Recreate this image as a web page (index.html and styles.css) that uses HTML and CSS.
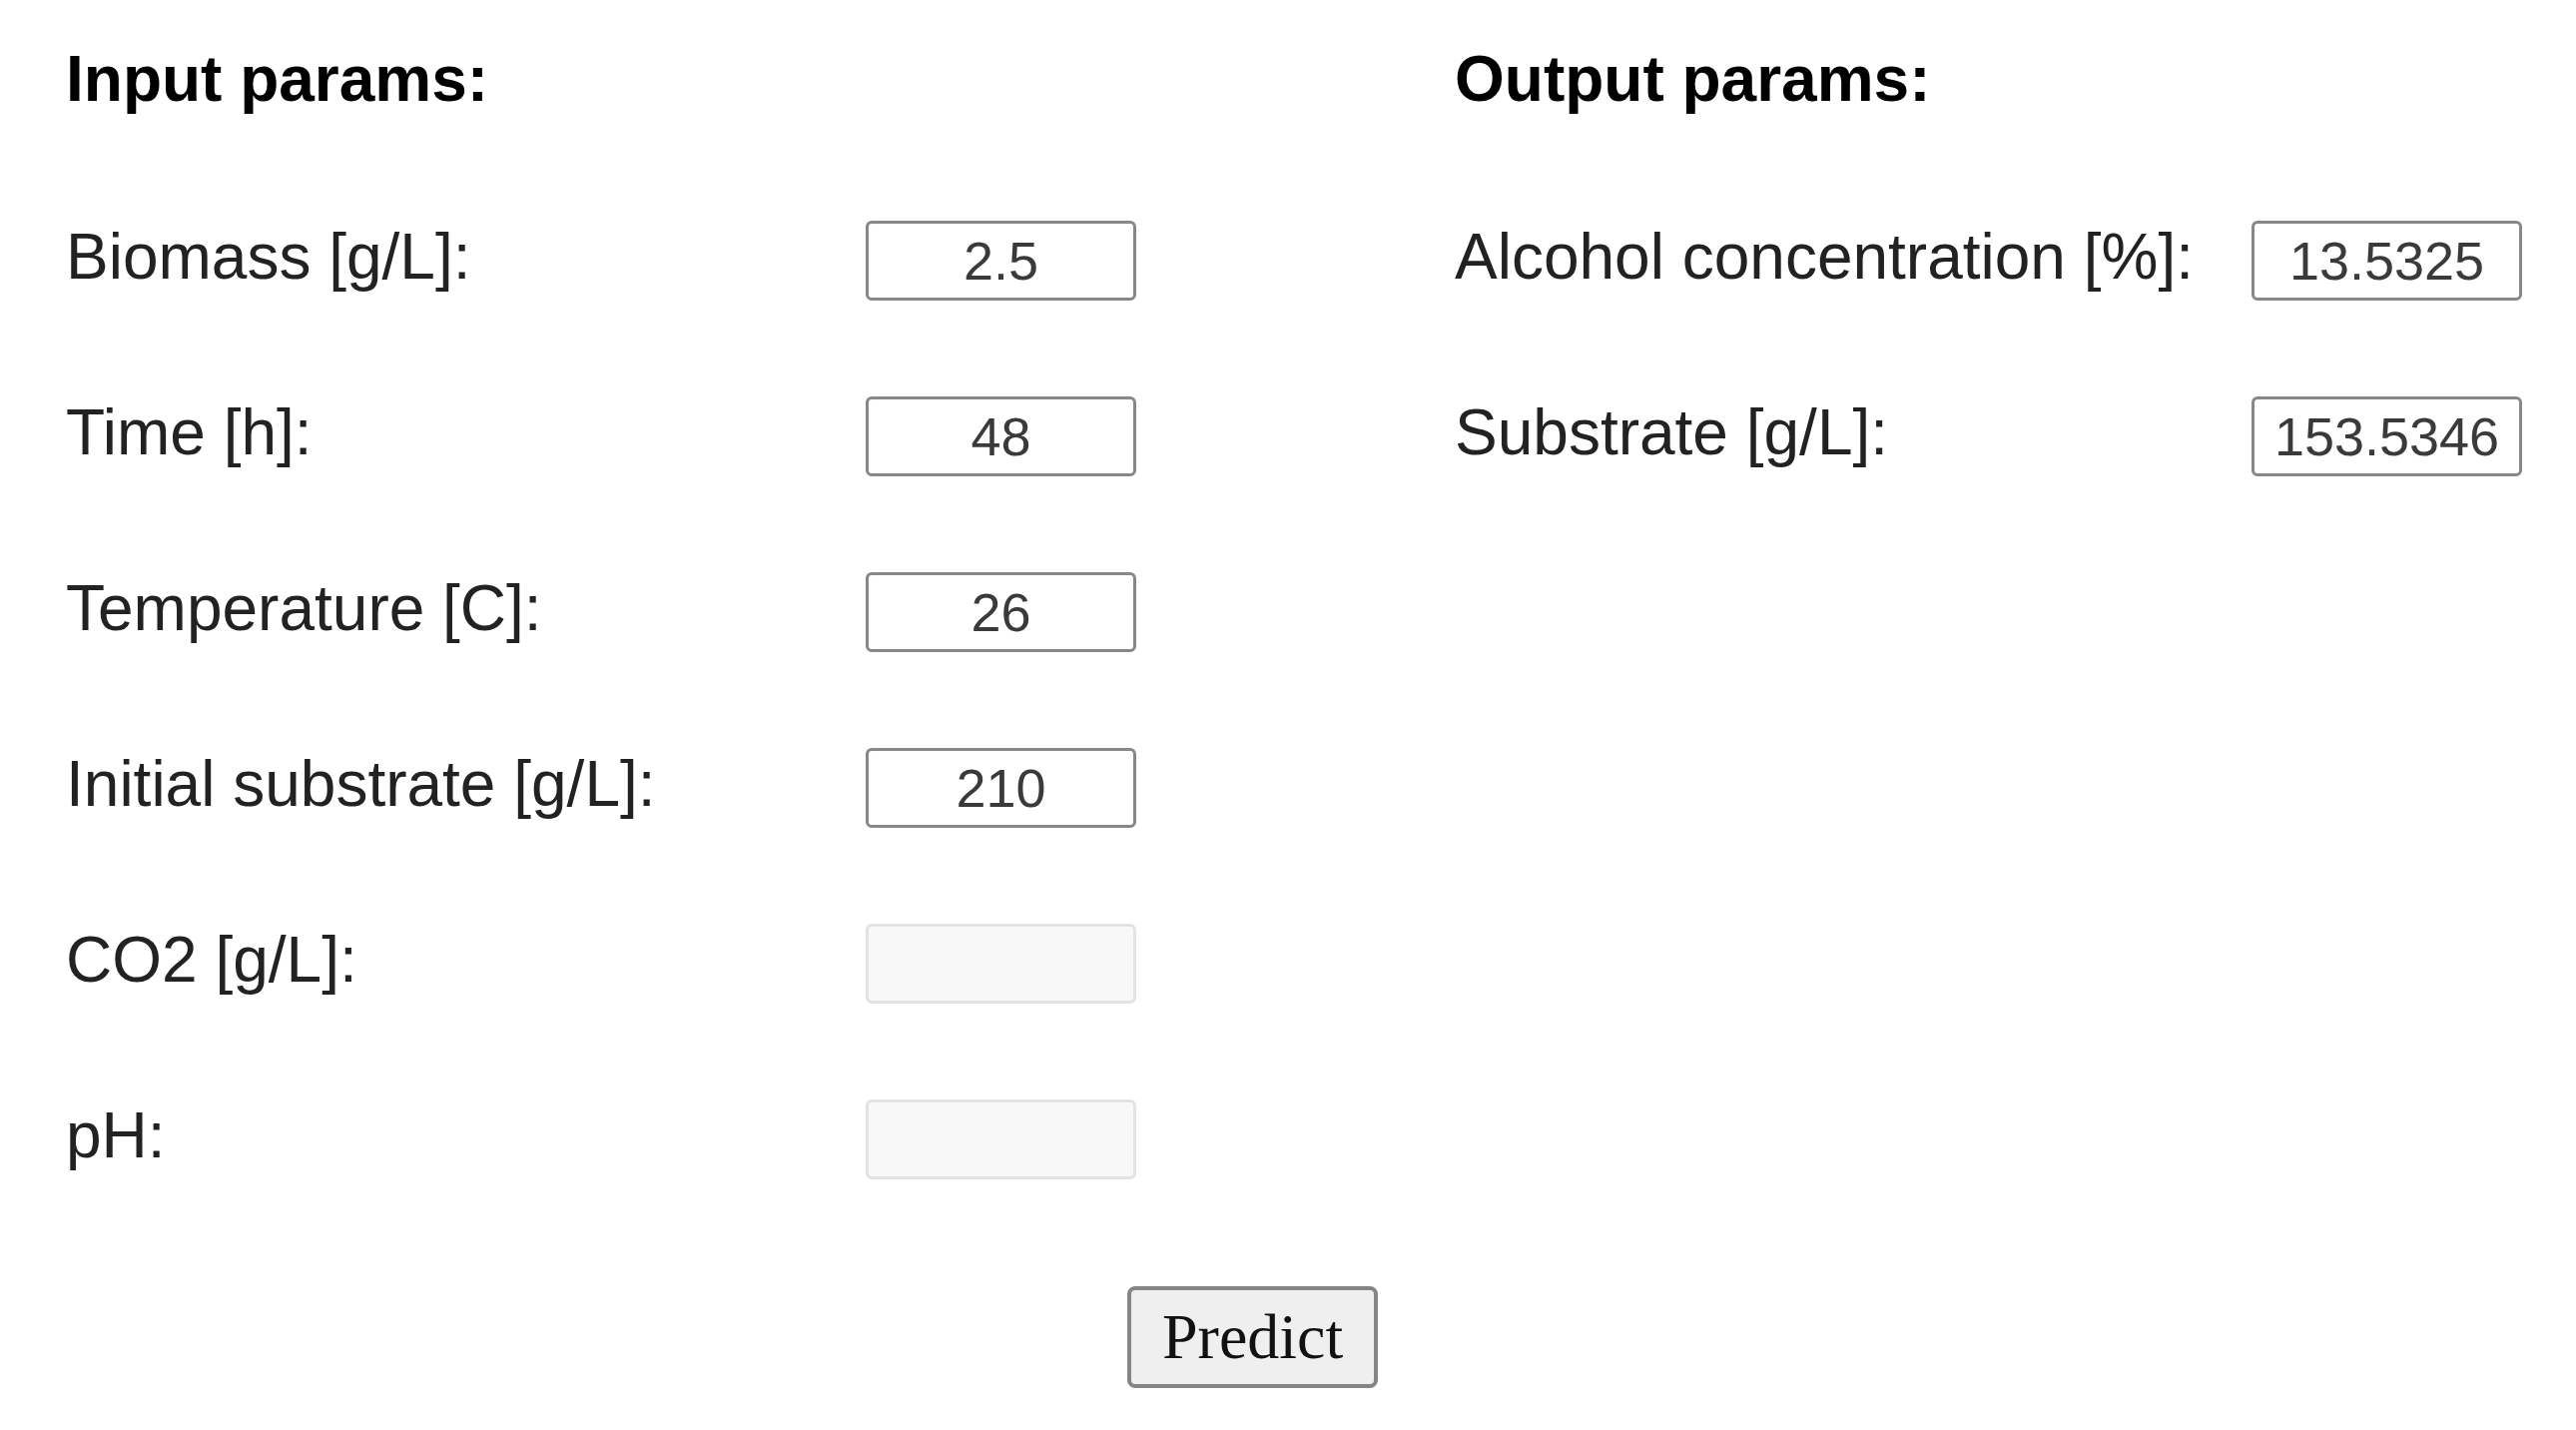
FILE: index.html
```html
<!DOCTYPE html>
<html lang="en">
<head>
  <meta charset="UTF-8">
  <title>Fermentation Predictor</title>
  <meta name="viewport" content="width=device-width, initial-scale=1.0" />
  <link rel="stylesheet" href="styles.css">
</head>
<body>

<form class="predictor" onsubmit="return false">
  <div class="columns">
    <section class="params params-input">
      <h3 class="params-title">Input params:</h3>
      <div class="param-row">
        <label for="biomass">Biomass [g/L]:</label>
        <input type="text" id="biomass" value="2.5" />
      </div>
      <div class="param-row">
        <label for="time">Time [h]:</label>
        <input type="text" id="time" value="48" />
      </div>
      <div class="param-row">
        <label for="temperature">Temperature [C]:</label>
        <input type="text" id="temperature" value="26" />
      </div>
      <div class="param-row">
        <label for="substrate0">Initial substrate [g/L]:</label>
        <input type="text" id="substrate0" value="210" />
      </div>
      <div class="param-row">
        <label for="co2">CO2 [g/L]:</label>
        <input type="text" id="co2" disabled />
      </div>
      <div class="param-row">
        <label for="ph">pH:</label>
        <input type="text" id="ph" disabled />
      </div>
    </section>

    <section class="params params-output">
      <h3 class="params-title">Output params:</h3>
      <div class="param-row">
        <label for="alcohol">Alcohol concentration [%]:</label>
        <input type="text" id="alcohol" value="13.5325" readonly />
      </div>
      <div class="param-row">
        <label for="substrate">Substrate [g/L]:</label>
        <input type="text" id="substrate" value="153.5346" readonly />
      </div>
    </section>
  </div>

  <div class="actions">
    <button type="submit">Predict</button>
  </div>
</form>

</body>
</html>
```

FILE: styles.css
```css
/* ============================
   Base Styling
============================ */
* {
  box-sizing: border-box;
}

body {
  margin: 0;
  padding: 0;
  background: #fff;
  color: #222;
  font-family: "Liberation Sans", Arial, sans-serif;
  font-size: 64px;
}

.predictor {
  padding: 42px 0 0 66px;
}

.columns {
  display: grid;
  grid-template-columns: 1391px 1075px;
}

/* ============================
   Parameter columns
============================ */
.params-title {
  margin: 0 0 57px;
  font-size: 64px;
  font-weight: bold;
  color: #000;
}

.param-row {
  display: flex;
  align-items: center;
  height: 176px;
}

.param-row label {
  padding-bottom: 8px;
}

.params-input .param-row label {
  width: 801px;
}

.params-output .param-row label {
  width: 798px;
}

.param-row input {
  width: 271px;
  height: 80px;
  padding: 0 6px;
  border: 3px solid #878787;
  border-radius: 6px;
  background: #fff;
  color: #3a3a3a;
  font-family: "Liberation Sans", Arial, sans-serif;
  font-size: 54px;
  text-align: center;
}

.param-row input:disabled {
  background: #f8f8f8;
  border-color: #e3e3e3;
}

/* ============================
   Predict button
============================ */
.actions {
  margin-top: 59px;
  padding-left: 1063px;
}

.actions button {
  height: 102px;
  padding: 0 31px;
  border: 4px solid #858585;
  border-radius: 8px;
  background: #efefef;
  color: #111;
  font-family: "Liberation Serif", "Times New Roman", serif;
  font-size: 64px;
  cursor: pointer;
}
```
